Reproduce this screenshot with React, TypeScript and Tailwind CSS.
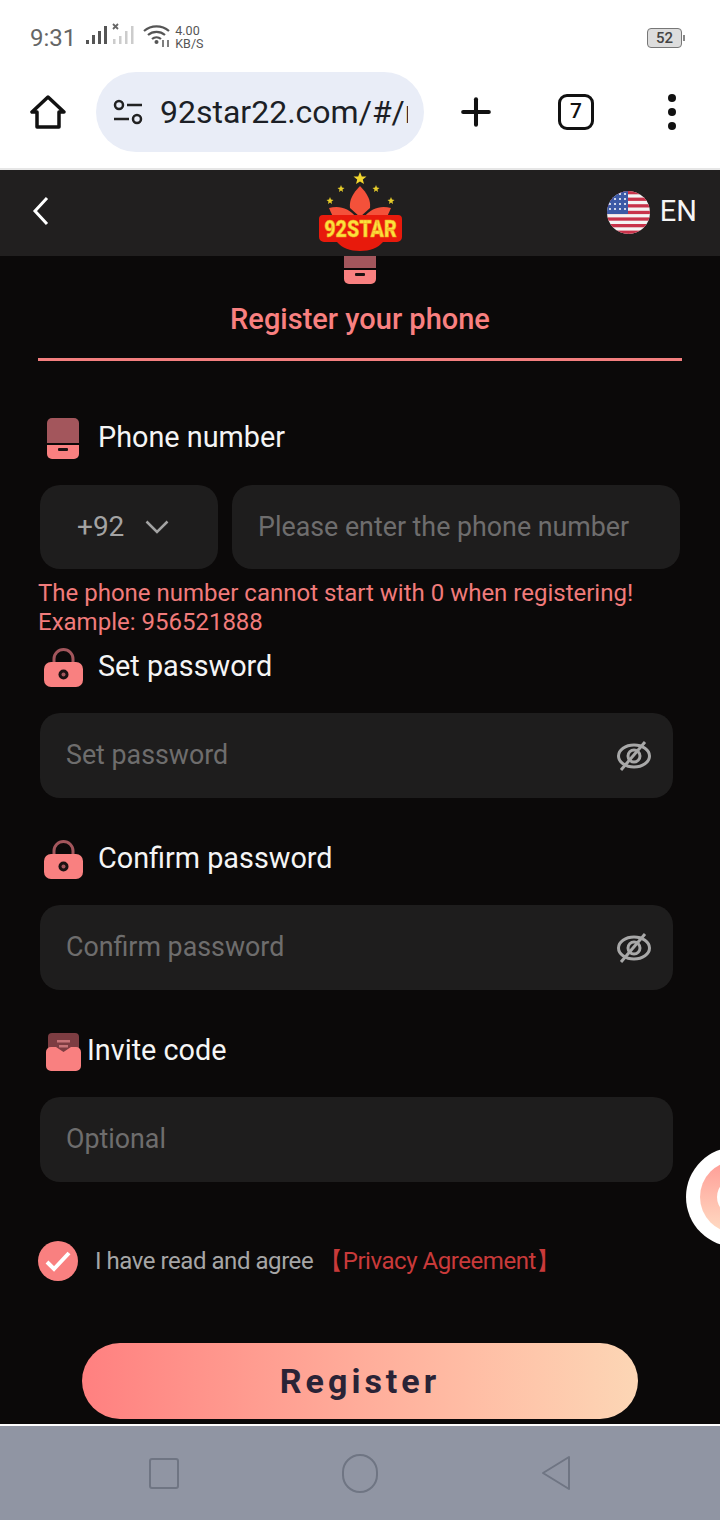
import React from 'react';
import { Plus } from 'lucide-react';

const PhoneIcon = ({ className }: { className?: string }) => (
  <svg className={className} width="32" height="41" viewBox="0 0 32 41">
    <path d="M0 25V5a5 5 0 0 1 5-5h22a5 5 0 0 1 5 5v20z" fill="#a3565c" />
    <path d="M0 27h32v9a5 5 0 0 1-5 5H5a5 5 0 0 1-5-5z" fill="#f98080" />
    <rect x="11" y="30" width="10" height="3" rx="1" fill="#1c1212" />
  </svg>
);

const LockIcon = () => (
  <svg width="39" height="39" viewBox="0 0 39 39">
    <path d="M10 17v-6a9.500 9.500 0 0 1 19 0v6" fill="none" stroke="#a3565c" strokeWidth="3" />
    <rect x="0" y="14" width="39" height="25" rx="7" fill="#f98080" />
    <circle cx="19.500" cy="26.500" r="5" fill="#1c1212" />
    <circle cx="19.500" cy="26.500" r="2" fill="#a3565c" />
  </svg>
);

const InviteIcon = () => (
  <svg width="35" height="39" viewBox="0 0 35 39">
    <path d="M2 20V5a4 4 0 0 1 4-4h23a4 4 0 0 1 4 4v15z" fill="#7d3d42" />
    <rect x="11" y="8" width="13" height="2.500" fill="#c77478" />
    <rect x="13" y="13" width="9" height="2.500" fill="#c77478" />
    <path d="M0 20a5 5 0 0 1 5-5h5l7.500 5 7.500-5h5a5 5 0 0 1 5 5v14a5 5 0 0 1-5 5H5a5 5 0 0 1-5-5z" fill="#f98080" />
  </svg>
);

const SlashedEye = () => (
  <svg width="36" height="30" viewBox="0 0 36 30" fill="none" stroke="#a8a8a8" strokeWidth="3">
    <ellipse cx="18" cy="15" rx="15.500" ry="11" />
    <circle cx="18" cy="15" r="6" />
    <path d="M29 1L5 29" />
  </svg>
);

const Logo = () => (
  <svg width="90" height="84" viewBox="0 0 90 84">
    <polygon points="45,2 46.800,6.500 51.500,6.500 47.800,9.500 49,14 45,11.500 41,14 42.200,9.500 38.500,6.500 43.200,6.500" fill="#f2d62e" />
    <polygon points="26,15 27,17.500 29.500,18 27.500,19.500 28,22 26,20.500 24,22 24.500,19.500 22.500,18 25,17.500" fill="#e6cc2a" />
    <polygon points="61,15 62,17.500 64.500,18 62.500,19.500 63,22 61,20.500 59,22 59.500,19.500 57.500,18 60,17.500" fill="#e6cc2a" />
    <polygon points="15,27 16,29.500 18.500,30 16.500,31.500 17,34 15,32.500 13,34 13.500,31.500 11.500,30 14,29.500" fill="#e6cc2a" />
    <polygon points="76,27 77,29.500 79.500,30 77.500,31.500 78,34 76,32.500 74,34 74.500,31.500 72.500,30 75,29.500" fill="#e6cc2a" />
    <path d="M45 16c7 7 11 14 10 22l-10 9-10-9c-1-8 3-15 10-22z" fill="#f4513a" />
    <path d="M14 38c10-3 20 0 27 9H18z" fill="#f4513a" />
    <path d="M76 38c-10-3-20 0-27 9h23z" fill="#f4513a" />
    <path d="M8 45h75a4 4 0 0 1 4 4v18a5 5 0 0 1-5 5H68c-5 6-13 9-23 9s-18-3-23-9H9a5 5 0 0 1-5-5V49a4 4 0 0 1 4-4z" fill="#e81a0c" />
    <text transform="translate(45.500 67) scale(0.820 1)" textAnchor="middle" fontFamily="Roboto, sans-serif" fontWeight="900" fontSize="24" fill="#fbe23c" stroke="#f59a1c" strokeWidth="0.500">92STAR</text>
  </svg>
);

const Flag = () => (
  <svg width="43" height="43" viewBox="0 0 43 43" className="rounded-full">
    <rect width="43" height="43" fill="#f4f4f4" />
    {[0, 6.600, 13.200, 19.800, 26.400, 33, 39.600].map((y) => (
      <rect key={y} x="0" y={y} width="43" height="3.300" fill="#c8324a" />
    ))}
    <rect width="21" height="23" fill="#3c5aa6" />
    {[3, 8, 13, 18].map((y) =>
      [3, 8, 13, 18].map((x) => <circle key={`${x}-${y}`} cx={x} cy={y} r="1" fill="#fff" />)
    )}
  </svg>
);

const StatusIcons = () => (
  <svg width="120" height="28" viewBox="0 0 120 28" className="ml-[9px]">
    <rect x="1" y="18" width="3" height="4" fill="#555" />
    <rect x="7" y="13" width="3" height="9" fill="#555" />
    <rect x="13" y="9" width="3" height="13" fill="#555" />
    <rect x="19" y="4" width="3" height="18" fill="#555" />
    <path d="M28 2l5 5m0-5l-5 5" stroke="#666" strokeWidth="1.800" />
    <rect x="28" y="17" width="2.500" height="5" fill="#ccc" />
    <rect x="34" y="14" width="2.500" height="8" fill="#ccc" />
    <rect x="40" y="9" width="2.500" height="13" fill="#ccc" />
    <rect x="46" y="4" width="2.500" height="18" fill="#ccc" />
    <path d="M59 9a19 19 0 0 1 25 0M63 13a13 13 0 0 1 17 0M67 17a7 7 0 0 1 9 0" fill="none" stroke="#555" strokeWidth="2.200" />
    <circle cx="71.500" cy="20" r="2" fill="#555" />
    <path d="M78 18v7M83 18v7" stroke="#555" strokeWidth="1.500" />
  </svg>
);

const FieldLabel = ({ icon, text, gap }: { icon: React.ReactNode; text: string; gap: string }) => (
  <div className={`flex h-[40px] items-center text-[28.800px] text-[#f5f5f5] ${gap}`}>
    {icon}
    <span>{text}</span>
  </div>
);

const PasswordInput = ({ placeholder }: { placeholder: string }) => (
  <div className="flex h-[85px] w-[633px] items-center justify-between rounded-[20px] bg-[#1e1d1d] pl-[26px] pr-[21px] text-[26.800px] text-[#6e6d6d]">
    <span>{placeholder}</span>
    <SlashedEye />
  </div>
);

const App: React.FC = () => {
  return (
    <div className="relative flex h-[1520px] w-[720px] flex-col overflow-hidden bg-[#0b0909] font-['Roboto',sans-serif]">
      {/* Phone status bar and browser toolbar */}
      <div className="h-[170px] shrink-0 border-b-2 border-[#e6e6e6] bg-white">
        <div className="flex h-[72px] items-start pl-[30px] pr-[35px] pt-[22px]">
          <span className="text-[24px] leading-[32px] text-[#666]">9:31</span>
          <StatusIcons />
          <div className="-ml-[30px] mt-[2px] flex flex-col text-[12.500px] leading-[13px] text-[#555]">
            <span>4.00</span>
            <span>KB/S</span>
          </div>
          <div className="ml-auto mt-[6px] flex h-[20px] w-[35px] items-center justify-center rounded-[4px] border border-[#777] bg-[#ddd] text-[15px] font-medium text-[#444]">
            52
          </div>
          <span className="ml-[1px] mt-[13px] h-[6px] w-[2px] bg-[#888]" />
        </div>
        <div className="flex h-[80px] items-center pl-[30px]">
          <svg width="36" height="36" viewBox="0 0 36 36" fill="none" stroke="#111" strokeWidth="3.500" strokeLinejoin="round">
            <path d="M18 3L2 18h5v15h22V18h5z" />
          </svg>
          <div className="ml-[30px] flex h-[80px] w-[328px] items-center overflow-hidden rounded-full bg-[#e9edf7] pl-[17px]">
            <svg width="30" height="26" viewBox="0 0 30 26" fill="none" stroke="#222" strokeWidth="2.500" className="shrink-0">
              <circle cx="6" cy="6" r="4" />
              <path d="M14 6h15M1 20h15" />
              <circle cx="24" cy="20" r="4" />
            </svg>
            <div className="ml-[17px] w-[248px] overflow-hidden whitespace-nowrap text-[32px] text-[#1c1f26]">92star22.com/#/register</div>
          </div>
          <Plus size={44} strokeWidth={2.200} className="ml-[30px] text-[#111]" />
          <div className="ml-[60px] flex h-[36px] w-[36px] items-center justify-center rounded-[9px] border-[3.500px] border-[#111] text-[21px] font-medium text-[#111]">
            7
          </div>
          <div className="ml-[74px] flex flex-col gap-[6px]">
            <span className="h-[8px] w-[8px] rounded-full bg-[#111]" />
            <span className="h-[8px] w-[8px] rounded-full bg-[#111]" />
            <span className="h-[8px] w-[8px] rounded-full bg-[#111]" />
          </div>
        </div>
      </div>

      {/* App header */}
      <header className="flex h-[86px] shrink-0 items-center bg-[#211f1f] pl-[32px] pr-[24px]">
        <svg width="17" height="30" viewBox="0 0 17 30" fill="none" stroke="#fff" strokeWidth="3" className="-mt-[5px]">
          <path d="M15 2L3 15l12 13" />
        </svg>
        <div className="ml-[266px] flex h-[86px] items-start">
          <Logo />
        </div>
        <div className="-mr-[1px] -mt-[2px] ml-auto flex items-center gap-[10px] text-[29px] text-[#f5f5f5]">
          <Flag />
          <span>EN</span>
        </div>
      </header>

      {/* Form */}
      <main className="flex-1 overflow-hidden">
        <div className="-mt-[13px] flex justify-center">
          <PhoneIcon />
        </div>
        <h1 className="mt-[17px] text-center text-[29px] font-medium leading-[36px] text-[#f98080]">Register your phone</h1>
        <div className="mx-[38px] mt-[21px] h-[3px] bg-[#f47f7f]" />

        <div className="pl-[40px] pr-[40px] pt-[57px]">
          <FieldLabel icon={<PhoneIcon className="ml-[7px]" />} text="Phone number" gap="gap-[19px]" />
          <div className="mt-[27px] flex gap-[14px]">
            <div className="flex h-[84px] w-[178px] items-center gap-[21px] rounded-[20px] bg-[#1e1d1d] pl-[37px] text-[28px] text-[#a3a3a3]">
              <span>+92</span>
              <svg width="24" height="14" viewBox="0 0 24 14" fill="none" stroke="#a3a3a3" strokeWidth="2.500">
                <path d="M1.500 1.500L12 12 22.500 1.500" />
              </svg>
            </div>
            <div className="flex h-[84px] w-[448px] items-center rounded-[20px] bg-[#1e1d1d] pl-[26px] text-[26.800px] text-[#6e6d6d]">
              Please enter the phone number
            </div>
          </div>
          <p className="-ml-[2px] mt-[10px] whitespace-nowrap text-[24px] leading-[29px] text-[#f17b7b]">
            The phone number cannot start with 0 when registering!
            <br />
            Example: 956521888
          </p>

          <div className="mt-[10px]">
            <FieldLabel icon={<LockIcon />} text="Set password" gap="gap-[15px] pl-[4px]" />
          </div>
          <div className="mt-[26px]">
            <PasswordInput placeholder="Set password" />
          </div>

          <div className="mt-[41px]">
            <FieldLabel icon={<LockIcon />} text="Confirm password" gap="gap-[15px] pl-[4px]" />
          </div>
          <div className="mt-[26px]">
            <PasswordInput placeholder="Confirm password" />
          </div>

          <div className="mt-[41px]">
            <FieldLabel icon={<InviteIcon />} text="Invite code" gap="gap-[6px] pl-[6px]" />
          </div>
          <div className="mt-[26px] flex h-[85px] w-[633px] items-center rounded-[20px] bg-[#1e1d1d] pl-[26px] text-[26.800px] text-[#6e6d6d]">
            Optional
          </div>

          <div className="-ml-[2px] mt-[59px] flex h-[40px] items-center">
            <div className="flex h-[40px] w-[40px] items-center justify-center rounded-full bg-[#f98080]">
              <svg width="26" height="22" viewBox="0 0 26 22" fill="none" stroke="#fff" strokeWidth="4">
                <path d="M2 12l7 7L24 3" />
              </svg>
            </div>
            <span className="ml-[17px] text-[24px] tracking-[-0.450px] text-[#a6a6a6]">I have read and agree</span>
            <span className="ml-[6px] text-[24px] tracking-[-0.450px] text-[#c93a3a]">【Privacy Agreement】</span>
          </div>

          <div className="mt-[62px] flex h-[76px] w-[556px] translate-x-[42px] items-center justify-center rounded-full bg-gradient-to-r from-[#ff8080] to-[#fcd6b5] text-[34px] font-bold tracking-[4px] text-[#2a2336]">
            Register
          </div>
        </div>
      </main>

      {/* Android nav bar */}
      <nav className="flex h-[96px] shrink-0 items-center justify-center gap-[163px] border-t-2 border-white bg-[#9095a3]">
        <div className="h-[31px] w-[30px] rounded-[3px] border-2 border-[#6f7583]" />
        <div className="h-[39px] w-[36px] rounded-full border-2 border-[#6f7583]" />
        <svg width="30" height="36" viewBox="0 0 30 36" fill="none" stroke="#6f7583" strokeWidth="2" strokeLinejoin="round">
          <path d="M28 2v32L2 18z" />
        </svg>
      </nav>

      {/* Floating support bubble */}
      <div className="absolute left-[686px] top-[1147px] flex h-[100px] w-[100px] items-center justify-center rounded-full bg-white">
        <div className="flex h-[72px] w-[72px] items-center justify-center rounded-full bg-gradient-to-b from-[#ff9c96] to-[#ffdcc4]">
          <div className="h-[38px] w-[38px] rounded-full bg-white" />
        </div>
      </div>
    </div>
  );
};

export default App;
